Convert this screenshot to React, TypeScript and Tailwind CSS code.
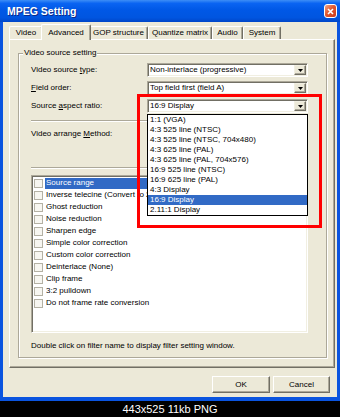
const TABS: { name: string; w: string; active?: boolean }[] = [
  { name: "Video", w: "w-[34px]" },
  { name: "Advanced", w: "w-[50px]", active: true },
  { name: "GOP structure", w: "w-[59px]" },
  { name: "Quantize matrix", w: "w-[64px]" },
  { name: "Audio", w: "w-[31px]" },
  { name: "System", w: "w-[38px]" },
];

const ASPECTS = [
  "1:1 (VGA)",
  "4:3 525 line (NTSC)",
  "4:3 525 line (NTSC, 704x480)",
  "4:3 625 line (PAL)",
  "4:3 625 line (PAL, 704x576)",
  "16:9 525 line (NTSC)",
  "16:9 625 line (PAL)",
  "4:3 Display",
  "16:9 Display",
  "2.11:1 Display",
];

const FILTERS = [
  "Source range",
  "Inverse telecine (Convert to 24p)",
  "Ghost reduction",
  "Noise reduction",
  "Sharpen edge",
  "Simple color correction",
  "Custom color correction",
  "Deinterlace (None)",
  "Clip frame",
  "3:2 pulldown",
  "Do not frame rate conversion",
];

function Combo({ value, children }: { value: string; children?: React.ReactNode }) {
  return (
    <div className="relative h-[14px] w-[161px]">
      <div className="flex h-full w-full items-center border border-t-[#aca899] border-l-[#aca899] border-r-white border-b-white bg-white shadow-[inset_1px_1px_0_#716f64,inset_-1px_-1px_0_#f1efe2]">
        <span className="flex-1 truncate pl-[2px]">{value}</span>
        <div className="mr-[1px] flex h-[10px] w-[12px] items-center justify-center border border-t-[#f1efe2] border-l-[#f1efe2] border-r-[#716f64] border-b-[#716f64] bg-[#ece9d8] shadow-[inset_-1px_-1px_0_#aca899]">
          <svg width="5" height="3" viewBox="0 0 5 3">
            <path d="M0 0h5L2.5 3z" fill="#000" />
          </svg>
        </div>
      </div>
      {children}
    </div>
  );
}

function Etched({ className = "" }: { className?: string }) {
  return <div className={`h-[2px] w-[277px] border-t border-b border-t-[#aca899] border-b-white ${className}`} />;
}

export default function App() {
  return (
    <div className="flex h-[417px] w-[340px] flex-col bg-black font-['Liberation_Sans',Arial,sans-serif] text-[8px] leading-[10px] text-black">
      <div className="flex h-[401px] flex-col bg-[#0a54df]">
        {/* title bar */}
        <div className="flex h-[22px] items-center justify-between bg-[linear-gradient(180deg,#3d8ef6_0%,#0a64f2_15%,#0058e6_45%,#0055e0_80%,#0046c8_100%)] pl-[7px] pr-[3px]">
          <span className="text-[10.5px] font-bold leading-[12px] text-white [text-shadow:1px_1px_0_#0a2a8a]">
            MPEG Setting
          </span>
          <div className="flex h-[14px] w-[13px] items-center justify-center rounded-[3px] border border-white bg-[linear-gradient(135deg,#f3a78a_0%,#e2582f_45%,#c8381a_100%)]">
            <svg width="7" height="7" viewBox="0 0 7 7">
              <path d="M1 1l5 5M6 1L1 6" stroke="#fff" strokeWidth="1.6" />
            </svg>
          </div>
        </div>

        {/* body */}
        <div className="mx-[3px] mb-[4px] flex flex-1 flex-col bg-[#ece9d8] pt-[2px]">
          <div className="flex h-[15px] items-end pl-[6px]">
            {TABS.map((t) =>
              t.active ? (
                <div
                  key={t.name}
                  className={`relative z-10 -mx-[2px] -mb-[1px] flex h-[16px] items-start justify-center rounded-t-[2px] border-l border-t border-r border-l-white border-t-white border-r-[#716f64] bg-[#ece9d8] pt-[3px] shadow-[inset_-1px_0_0_#aca899] ${t.w}`}
                >
                  {t.name}
                </div>
              ) : (
                <div
                  key={t.name}
                  className={`flex h-[13px] items-center justify-center rounded-t-[2px] border-l border-t border-r border-l-white border-t-white border-r-[#716f64] shadow-[inset_-1px_0_0_#aca899] ${t.w}`}
                >
                  {t.name}
                </div>
              )
            )}
          </div>

          {/* tab page */}
          <div className="ml-[6px] h-[329px] w-[326px] border border-l-white border-t-white border-r-[#716f64] border-b-[#716f64] pl-[8px] pt-[13px] shadow-[inset_-1px_-1px_0_#aca899]">
            <div className="relative h-[305px] w-[309px] border border-[#aca899] pl-[12px] pt-[9px] shadow-[inset_1px_1px_0_#fff,1px_1px_0_#fff]">
              <span className="absolute -top-[6px] left-[4px] bg-[#ece9d8] px-[1px]">Video source setting</span>

              <div className="flex flex-col gap-[4px]">
                <div className="flex h-[14px] items-center">
                  <span className="w-[116px]">
                    Video source <span className="underline">t</span>ype:
                  </span>
                  <Combo value="Non-interlace (progressive)" />
                </div>
                <div className="flex h-[14px] items-center">
                  <span className="w-[116px]">
                    <span className="underline">F</span>ield order:
                  </span>
                  <Combo value="Top field first (field A)" />
                </div>
                <div className="relative z-20 flex h-[14px] items-center">
                  <span className="w-[116px]">
                    Source <span className="underline">a</span>spect ratio:
                  </span>
                  <Combo value="16:9 Display">
                    <div className="absolute left-0 top-[15px] z-20 flex h-[102px] w-[161px] flex-col border border-black bg-white">
                      {ASPECTS.map((a, i) => (
                        <div
                          key={a}
                          className={`flex h-[10px] items-center whitespace-nowrap pl-[2px] ${i === 8 ? "bg-[#316ac5] text-white" : ""}`}
                        >
                          {a}
                        </div>
                      ))}
                    </div>
                    <div className="pointer-events-none absolute -left-[10px] -top-[5px] z-30 h-[134px] w-[185px] border-[3px] border-[#ff0000]" />
                  </Combo>
                </div>
              </div>

              <Etched className="mt-[7px]" />
              <div className="mt-[7px] h-[10px]">
                Video arrange <span className="underline">M</span>ethod:
              </div>
              <Etched className="mt-[28px]" />

              {/* filter list */}
              <div className="mt-[6px] h-[158px] w-[277px] border border-t-[#aca899] border-l-[#aca899] border-r-white border-b-white bg-white pt-[1px] shadow-[inset_1px_1px_0_#716f64,inset_-1px_-1px_0_#f1efe2]">
                {FILTERS.map((f, i) => (
                  <div key={f} className="flex h-[12px] items-center pl-[2px]">
                    <div className="h-[9px] w-[9px] border border-[#b4b1a4] bg-[#f7f6f1]" />
                    <span
                      className={`ml-[2px] flex h-[11px] items-center whitespace-nowrap px-[1px] ${i === 0 ? "flex-1 bg-[#316ac5] text-white" : ""}`}
                    >
                      {f}
                    </span>
                  </div>
                ))}
              </div>

              <div className="mt-[8px] h-[10px] whitespace-nowrap">
                Double click on filter name to display filter setting window.
              </div>
            </div>
          </div>

          {/* buttons */}
          <div className="mt-[8px] flex justify-end gap-[3px] pr-[7px]">
            <button className="flex h-[17px] w-[58px] items-center justify-center border border-l-white border-t-white border-r-[#716f64] border-b-[#716f64] bg-[#ece9d8] shadow-[inset_-1px_-1px_0_#aca899]">
              OK
            </button>
            <button className="flex h-[17px] w-[57px] items-center justify-center border border-l-white border-t-white border-r-[#716f64] border-b-[#716f64] bg-[#ece9d8] shadow-[inset_-1px_-1px_0_#aca899]">
              Cancel
            </button>
          </div>
        </div>
      </div>
      <div className="flex flex-1 items-center justify-center text-[11px] leading-[12px] text-white">
        443x525 11kb PNG
      </div>
    </div>
  );
}
